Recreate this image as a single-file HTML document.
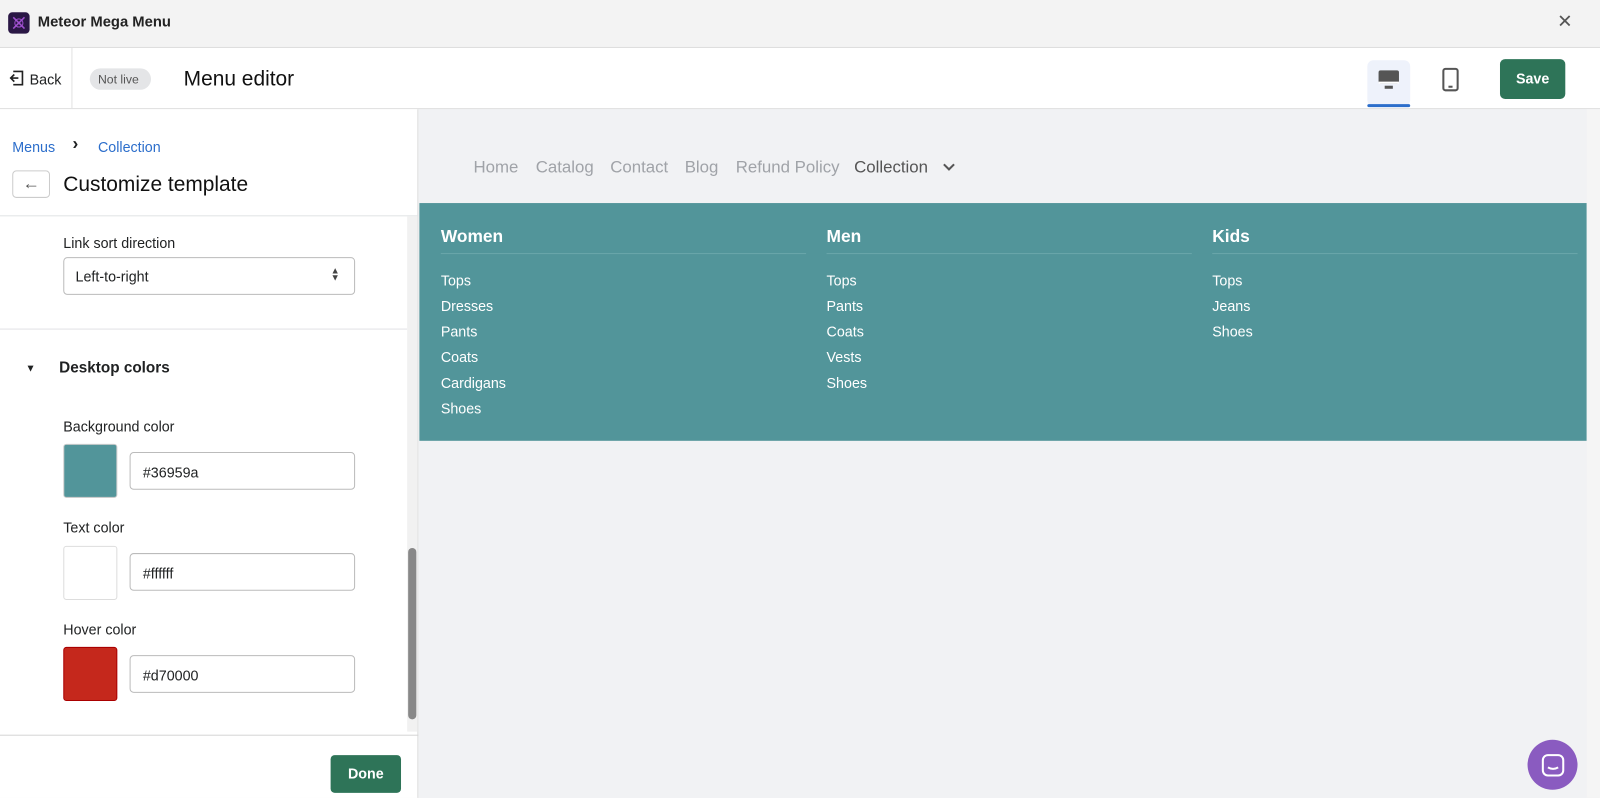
<!DOCTYPE html>
<html><head><style>
*{box-sizing:border-box;margin:0;padding:0}
body{width:1600px;height:798px;overflow:hidden;font-family:"Liberation Sans",sans-serif;background:#f1f2f4;color:#202223}
#w{position:absolute;left:0;top:0;width:1568px;height:782px;transform:scale(1.0204);transform-origin:0 0}
.abs{position:absolute}
.t{position:absolute;white-space:nowrap}
.n{position:absolute;top:155px;font-size:16.5px;color:#a0a3a8;white-space:nowrap}
</style></head><body><div id="w">
<div class="abs" style="left:0;top:0;width:1568px;height:47px;background:#f3f3f3;border-bottom:1px solid #ddd"></div>
<div class="abs" style="left:8px;top:12px;width:21px;height:21px;background:#2a1745;border-radius:4px"></div>
<svg class="abs" style="left:8px;top:12px" width="21" height="21"><path d="M5 5L16 16M16 5L5 16" stroke="#a050d0" stroke-width="1.5"/><circle cx="10.5" cy="10.5" r="4" fill="none" stroke="#a050d0"/></svg>
<div class="t" style="left:37px;top:14px;font-size:14.5px;font-weight:bold;color:#222">Meteor Mega Menu</div>
<div class="t" style="left:1526px;top:11px;font-size:18px;color:#555">✕</div>

<div class="abs" style="left:0;top:47px;width:1568px;height:60px;background:#fff;border-bottom:1px solid #ddd"></div>
<div class="abs" style="left:70px;top:47px;width:1px;height:60px;background:#e1e1e1"></div>
<svg class="abs" style="left:9px;top:69px" width="15" height="15"><path d="M4 1H13V14H4M1 7.5H9M5 4L1.5 7.5L5 11" fill="none" stroke="#222" stroke-width="1.6"/></svg>
<div class="t" style="left:29px;top:70px;font-size:14px">Back</div>
<div class="abs" style="left:88px;top:67px;width:60px;height:21px;border-radius:11px;background:#e4e5e7"></div>
<div class="t" style="left:96px;top:71px;font-size:12px;color:#555">Not live</div>
<div class="t" style="left:180px;top:66px;font-size:20.5px;color:#111">Menu editor</div>
<div class="abs" style="left:1340px;top:59px;width:42px;height:45px;background:#eef2fb;border-radius:6px"></div>
<div class="abs" style="left:1340px;top:102px;width:42px;height:3px;background:#2c6ecb;border-radius:2px"></div>
<svg class="abs" style="left:1350px;top:68px" width="22" height="22"><rect x="1" y="1" width="20" height="13" rx="2" fill="#555"/><rect x="1" y="12" width="20" height="2" fill="#fff"/><rect x="7" y="16" width="8" height="3" fill="#555"/></svg>
<svg class="abs" style="left:1413px;top:66px" width="18" height="25"><rect x="1.5" y="1.5" width="14" height="21" rx="2" fill="none" stroke="#555" stroke-width="2"/><rect x="6.5" y="18" width="4" height="2" fill="#555"/></svg>
<div class="abs" style="left:1470px;top:58px;width:64px;height:39px;background:#2e7458;border-radius:5px;color:#fff;font-weight:bold;font-size:14px;text-align:center;line-height:39px">Save</div>

<div class="abs" style="left:0;top:107px;width:410px;height:675px;background:#fff;border-right:1px solid #ddd"></div>
<div class="abs" style="left:0;top:211px;width:410px;height:1px;background:#e1e3e5"></div>
<div class="t" style="left:12px;top:136px;font-size:14px;color:#2c6ecb">Menus</div>
<div class="t" style="left:71px;top:131px;font-size:17px;font-weight:bold">›</div>
<div class="t" style="left:96px;top:136px;font-size:14px;color:#2c6ecb">Collection</div>
<div class="abs" style="left:12px;top:167px;width:37px;height:27px;border:1px solid #ccc;border-radius:4px;font-size:17px;text-align:center;line-height:24px;color:#555">←</div>
<div class="t" style="left:62px;top:169px;font-size:20.5px;color:#111">Customize template</div>
<div class="abs" style="left:399px;top:212px;width:10px;height:505px;background:#f1f1f1"></div>
<div class="abs" style="left:400px;top:537px;width:8px;height:168px;background:#888;border-radius:4px"></div>
<div class="t" style="left:62px;top:230px;font-size:14px">Link sort direction</div>
<div class="abs" style="left:62px;top:252px;width:286px;height:37px;border:1px solid #bbb;border-radius:4px"></div>
<div class="t" style="left:74px;top:263px;font-size:14px">Left-to-right</div>
<div class="t" style="left:324px;top:262px;font-size:9px;color:#444;line-height:7px">▲<br>▼</div>
<div class="abs" style="left:0;top:322px;width:399px;height:1px;background:#e1e3e5"></div>
<div class="t" style="left:25px;top:356px;font-size:10px">▼</div>
<div class="t" style="left:58px;top:352px;font-size:15px;font-weight:bold">Desktop colors</div>
<div class="t" style="left:62px;top:410px;font-size:14px">Background color</div>
<div class="abs" style="left:62px;top:435px;width:53px;height:53px;background:#52959a;border-radius:3px;border:1px solid #ccc"></div>
<div class="abs" style="left:127px;top:443px;width:221px;height:37px;border:1px solid #bbb;border-radius:4px;padding:11px 12px;font-size:14px">#36959a</div>
<div class="t" style="left:62px;top:509px;font-size:14px">Text color</div>
<div class="abs" style="left:62px;top:535px;width:53px;height:53px;background:#fff;border-radius:3px;border:1px solid #ddd"></div>
<div class="abs" style="left:127px;top:542px;width:221px;height:37px;border:1px solid #bbb;border-radius:4px;padding:11px 12px;font-size:14px">#ffffff</div>
<div class="t" style="left:62px;top:609px;font-size:14px">Hover color</div>
<div class="abs" style="left:62px;top:634px;width:53px;height:53px;background:#c5281c;border-radius:3px;border:1px solid #a00"></div>
<div class="abs" style="left:127px;top:642px;width:221px;height:37px;border:1px solid #bbb;border-radius:4px;padding:11px 12px;font-size:14px">#d70000</div>
<div class="abs" style="left:0;top:720px;width:410px;height:1px;background:#d5d5d5"></div>
<div class="abs" style="left:324px;top:740px;width:69px;height:37px;background:#2e7458;border-radius:4px;color:#fff;font-weight:bold;font-size:14px;text-align:center;line-height:37px">Done</div>

<div class="n" style="left:464px">Home</div>
<div class="n" style="left:525px">Catalog</div>
<div class="n" style="left:598px">Contact</div>
<div class="n" style="left:671px">Blog</div>
<div class="n" style="left:721px">Refund Policy</div>
<div class="n" style="left:837px;color:#555">Collection</div>
<svg class="abs" style="left:923px;top:159px" width="14" height="10"><path d="M2 2L7 7L12 2" fill="none" stroke="#555" stroke-width="2"/></svg>
<div class="abs" style="left:411px;top:199px;width:1144px;height:233px;background:#52959a"></div>
<div class="abs" style="left:1555px;top:107px;width:13px;height:675px;background:#f5f5f5"></div>
<div style="position:absolute;left:432px;top:219px;color:#fff;font-size:14px;line-height:25px;width:1115px">
<div style="position:absolute;left:0;width:358px"><div style="font-size:17px;font-weight:bold;border-bottom:1px solid #6aa6aa;padding-bottom:4px;margin-bottom:14px">Women</div>Tops<br>Dresses<br>Pants<br>Coats<br>Cardigans<br>Shoes</div>
<div style="position:absolute;left:378px;width:358px"><div style="font-size:17px;font-weight:bold;border-bottom:1px solid #6aa6aa;padding-bottom:4px;margin-bottom:14px">Men</div>Tops<br>Pants<br>Coats<br>Vests<br>Shoes</div>
<div style="position:absolute;left:756px;width:358px"><div style="font-size:17px;font-weight:bold;border-bottom:1px solid #6aa6aa;padding-bottom:4px;margin-bottom:14px">Kids</div>Tops<br>Jeans<br>Shoes</div>
</div>
<div class="abs" style="left:1497px;top:725px;width:49px;height:49px;border-radius:50%;background:#8a5bc0"></div>
<svg class="abs" style="left:1510px;top:738px" width="24" height="24"><rect x="2" y="2" width="20" height="20" rx="5" fill="none" stroke="#fff" stroke-width="2"/><path d="M7 14Q12 17 17 14" fill="none" stroke="#fff" stroke-width="2"/></svg>
</div></body></html>
